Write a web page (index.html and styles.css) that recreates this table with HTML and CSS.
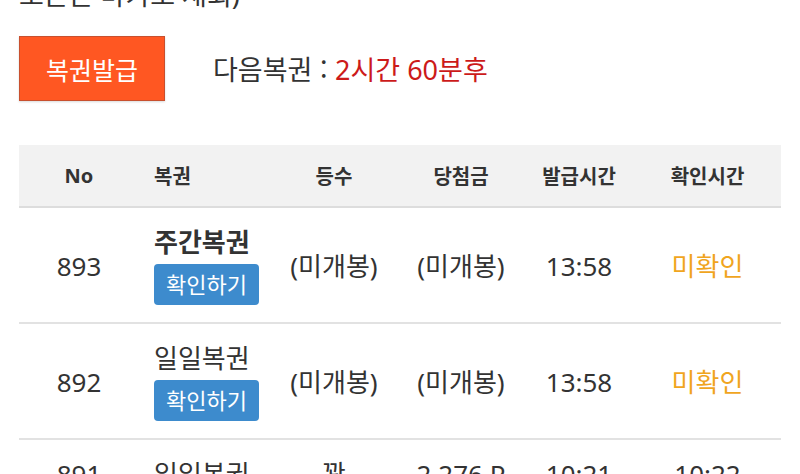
FILE: index.html
```html
<!DOCTYPE html>
<html lang="ko">
<head>
<meta charset="utf-8">
<link rel="stylesheet" href="styles.css">
</head>
<body>
<div class="page">
  <p class="intro">오픈은 마카오 재회)</p>
  <div class="issue">
    <button class="issue-btn">복권발급</button>
    <div class="next">다음복권 : <span class="next-time">2시간 60분후</span></div>
  </div>
  <table class="list">
    <colgroup>
      <col class="c1"><col class="c2"><col class="c3"><col class="c4"><col class="c5"><col class="c6">
    </colgroup>
    <thead>
      <tr><th>No</th><th class="left">복권</th><th>등수</th><th>당첨금</th><th>발급시간</th><th>확인시간</th></tr>
    </thead>
    <tbody>
      <tr>
        <td>893</td>
        <td class="left"><div class="name bold">주간복권</div><span class="check">확인하기</span></td>
        <td>(미개봉)</td><td>(미개봉)</td><td>13:58</td><td class="pending">미확인</td>
      </tr>
      <tr>
        <td>892</td>
        <td class="left"><div class="name">일일복권</div><span class="check">확인하기</span></td>
        <td>(미개봉)</td><td>(미개봉)</td><td>13:58</td><td class="pending">미확인</td>
      </tr>
      <tr>
        <td>891</td>
        <td class="left"><div class="name">일일복권</div></td>
        <td>꽝</td><td>2,276 P</td><td>10:21</td><td>10:22</td>
      </tr>
    </tbody>
  </table>
</div>
</body>
</html>
```
FILE: styles.css
```css
html, body {
  margin: 0;
  padding: 0;
  background: #fff;
}
body {
  font-family: "Noto Sans", "Noto Sans CJK KR", sans-serif;
  color: #333;
  overflow: hidden;
  height: 474px;
}
.page {
  padding: 0 19px;
}
.intro {
  margin: -23px 0 0;
  font-size: 27px;
  line-height: 36px;
}
.issue {
  display: flex;
  align-items: center;
  margin-top: 23px;
  gap: 48px;
}
.issue-btn {
  width: 146px;
  height: 65px;
  background: #ff5722;
  border: 1px solid #c8502e;
  color: #fff;
  font-family: "Noto Sans CJK KR", sans-serif;
  font-size: 25px;
  padding: 0;
  box-shadow: 0 1px 2px rgba(0,0,0,0.15);
}
.next {
  font-family: "Noto Sans CJK KR", sans-serif;
  font-size: 27px;
  color: #333;
}
.next-time {
  font-family: "Noto Sans", "Noto Sans CJK KR", sans-serif;
  color: #cc1a1a;
}
.list {
  margin-top: 44px;
  width: 762px;
  table-layout: fixed;
  border-collapse: collapse;
}
.c1 { width: 120px; }
.c2 { width: 131px; }
.c3 { width: 128px; }
.c4 { width: 126px; }
.c5 { width: 110px; }
.c6 { width: 147px; }
.list th {
  background: #f2f2f2;
  height: 61px;
  font-size: 20px;
  font-weight: 700;
  text-align: center;
  border-bottom: 2px solid #ddd;
  padding: 0;
}
.list td {
  font-size: 26px;
  line-height: 32px;
  text-align: center;
  border-bottom: 2px solid #e2e2e2;
  padding: 18px 0 17px;
  vertical-align: middle;
}
.list th.left, .list td.left {
  text-align: left;
  padding-left: 15px;
}
.name {
  font-size: 26px;
  line-height: 32px;
}
.bold {
  font-weight: 700;
}
.check {
  display: inline-block;
  vertical-align: top;
  margin-top: 6px;
  background: #3d8bcd;
  color: #fff;
  font-size: 22px;
  line-height: 41px;
  width: 105px;
  text-align: center;
  border-radius: 4px;
}
.pending {
  color: #f0a51e;
}
```
